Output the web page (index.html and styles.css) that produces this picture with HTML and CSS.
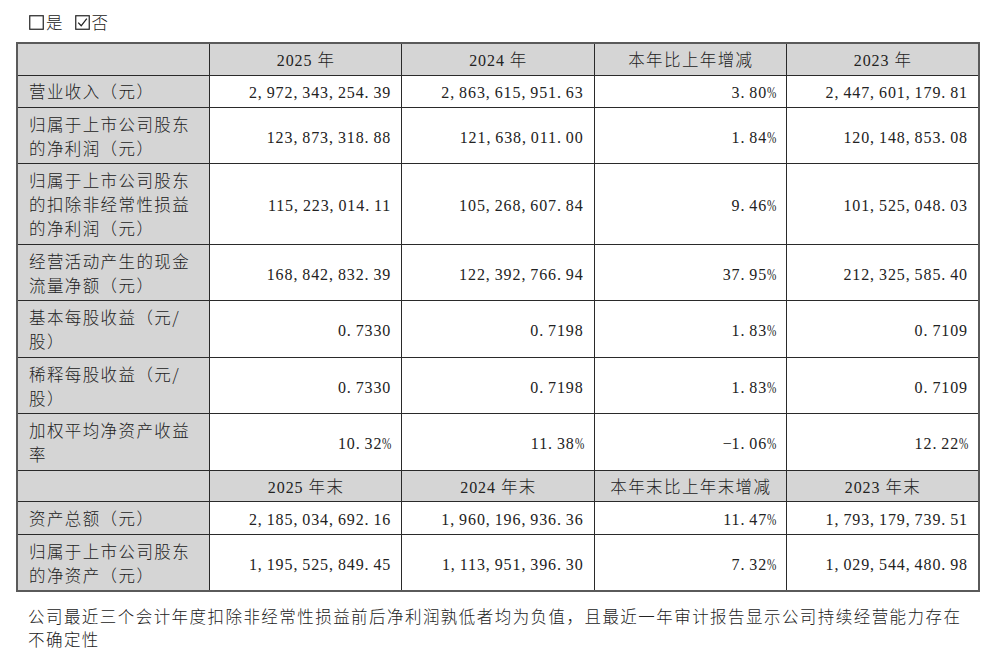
FILE: index.html
```html
<!DOCTYPE html>
<html lang="zh-CN">
<head>
<meta charset="utf-8">
<title>主要会计数据</title>
<link rel="stylesheet" href="styles.css">
</head>
<body>
<div class="page">
  <div class="choice">
    <svg class="cb" width="15" height="15" viewBox="0 0 15 15"><rect x="0.75" y="0.75" width="13.5" height="13.5" fill="none" stroke="#222" stroke-width="1.2"/></svg><span class="lbl">是</span>
    <svg class="cb cb2" width="15" height="15" viewBox="0 0 15 15"><rect x="0.75" y="0.75" width="13.5" height="13.5" fill="none" stroke="#222" stroke-width="1.2"/><path d="M3.2 7.6 L6.2 10.8 L11.8 3.6" fill="none" stroke="#222" stroke-width="1.3"/></svg><span class="lbl">否</span>
  </div>

  <table class="fin">
    <tr class="hd">
      <td></td>
      <td><span class="n">2025</span> 年</td>
      <td><span class="n">2024</span> 年</td>
      <td>本年比上年增减</td>
      <td><span class="n">2023</span> 年</td>
    </tr>
    <tr>
      <td class="lab">营业收入（元）</td>
      <td class="v"><span class="n">2<i>,</i>972<i>,</i>343<i>,</i>254<i>.</i>39</span></td>
      <td class="v"><span class="n">2<i>,</i>863<i>,</i>615<i>,</i>951<i>.</i>63</span></td>
      <td class="v"><span class="n">3<i>.</i>80<b>%</b></span></td>
      <td class="v"><span class="n">2<i>,</i>447<i>,</i>601<i>,</i>179<i>.</i>81</span></td>
    </tr>
    <tr>
      <td class="lab">归属于上市公司股东<br>的净利润（元）</td>
      <td class="v"><span class="n">123<i>,</i>873<i>,</i>318<i>.</i>88</span></td>
      <td class="v"><span class="n">121<i>,</i>638<i>,</i>011<i>.</i>00</span></td>
      <td class="v"><span class="n">1<i>.</i>84<b>%</b></span></td>
      <td class="v"><span class="n">120<i>,</i>148<i>,</i>853<i>.</i>08</span></td>
    </tr>
    <tr>
      <td class="lab">归属于上市公司股东<br>的扣除非经常性损益<br>的净利润（元）</td>
      <td class="v"><span class="n">115<i>,</i>223<i>,</i>014<i>.</i>11</span></td>
      <td class="v"><span class="n">105<i>,</i>268<i>,</i>607<i>.</i>84</span></td>
      <td class="v"><span class="n">9<i>.</i>46<b>%</b></span></td>
      <td class="v"><span class="n">101<i>,</i>525<i>,</i>048<i>.</i>03</span></td>
    </tr>
    <tr>
      <td class="lab">经营活动产生的现金<br>流量净额（元）</td>
      <td class="v"><span class="n">168<i>,</i>842<i>,</i>832<i>.</i>39</span></td>
      <td class="v"><span class="n">122<i>,</i>392<i>,</i>766<i>.</i>94</span></td>
      <td class="v"><span class="n">37<i>.</i>95<b>%</b></span></td>
      <td class="v"><span class="n">212<i>,</i>325<i>,</i>585<i>.</i>40</span></td>
    </tr>
    <tr>
      <td class="lab">基本每股收益（元/<br>股）</td>
      <td class="v"><span class="n">0<i>.</i>7330</span></td>
      <td class="v"><span class="n">0<i>.</i>7198</span></td>
      <td class="v"><span class="n">1<i>.</i>83<b>%</b></span></td>
      <td class="v"><span class="n">0<i>.</i>7109</span></td>
    </tr>
    <tr>
      <td class="lab">稀释每股收益（元/<br>股）</td>
      <td class="v"><span class="n">0<i>.</i>7330</span></td>
      <td class="v"><span class="n">0<i>.</i>7198</span></td>
      <td class="v"><span class="n">1<i>.</i>83<b>%</b></span></td>
      <td class="v"><span class="n">0<i>.</i>7109</span></td>
    </tr>
    <tr>
      <td class="lab">加权平均净资产收益<br>率</td>
      <td class="v"><span class="n">10<i>.</i>32<b>%</b></span></td>
      <td class="v"><span class="n">11<i>.</i>38<b>%</b></span></td>
      <td class="v"><span class="n"><i class="m">−</i>1<i>.</i>06<b>%</b></span></td>
      <td class="v"><span class="n">12<i>.</i>22<b>%</b></span></td>
    </tr>
    <tr class="hd">
      <td></td>
      <td><span class="n">2025</span> 年末</td>
      <td><span class="n">2024</span> 年末</td>
      <td>本年末比上年末增减</td>
      <td><span class="n">2023</span> 年末</td>
    </tr>
    <tr>
      <td class="lab">资产总额（元）</td>
      <td class="v"><span class="n">2<i>,</i>185<i>,</i>034<i>,</i>692<i>.</i>16</span></td>
      <td class="v"><span class="n">1<i>,</i>960<i>,</i>196<i>,</i>936<i>.</i>36</span></td>
      <td class="v"><span class="n">11<i>.</i>47<b>%</b></span></td>
      <td class="v"><span class="n">1<i>,</i>793<i>,</i>179<i>,</i>739<i>.</i>51</span></td>
    </tr>
    <tr>
      <td class="lab">归属于上市公司股东<br>的净资产（元）</td>
      <td class="v"><span class="n">1<i>,</i>195<i>,</i>525<i>,</i>849<i>.</i>45</span></td>
      <td class="v"><span class="n">1<i>,</i>113<i>,</i>951<i>,</i>396<i>.</i>30</span></td>
      <td class="v"><span class="n">7<i>.</i>32<b>%</b></span></td>
      <td class="v"><span class="n">1<i>,</i>029<i>,</i>544<i>,</i>480<i>.</i>98</span></td>
    </tr>
  </table>

  <p class="note">公司最近三个会计年度扣除非经常性损益前后净利润孰低者均为负值，且最近一年审计报告显示公司持续经营能力存在<br>不确定性</p>
</div>
</body>
</html>
```

FILE: styles.css
```css
html, body {
  margin: 0;
  padding: 0;
  background: #ffffff;
}

body {
  font-family: "Noto Sans CJK SC", "Noto Sans", sans-serif;
  font-weight: 300;
  color: #222222;
}

.page {
  padding: 10px 0 0 16px;
  width: 966px;
}

.choice {
  height: 24px;
  line-height: 24px;
  padding-left: 13px;
  margin-bottom: 8px;
  font-size: 16.5px;
  display: flex;
  align-items: center;
}

.cb {
  display: block;
  flex: none;
}

.cb2 {
  margin-left: 12px;
}

.lbl {
  margin-left: 2px;
}

.fin {
  border-collapse: collapse;
  table-layout: fixed;
  width: 964px;
  border: 2px solid #5a5a5a;
}

.fin td {
  border: 1px solid #2a2a2a;
  padding: 3.8px 10px 3.7px 11px;
  line-height: 24px;
  font-size: 16.5px;
  letter-spacing: 1.4px;
  vertical-align: middle;
  white-space: nowrap;
}

.fin tr.hd td {
  background: #d5d5d5;
  text-align: center;
  padding-top: 3px;
  padding-bottom: 3.5px;
}

.fin td.lab {
  background: #d5d5d5;
}

.fin td.v {
  text-align: right;
  padding-right: 10px;
}

.n {
  font-family: "Liberation Serif", serif;
  font-weight: 400;
  font-size: 16px;
  line-height: 16px;
  letter-spacing: 0.9px;
}

.n i {
  font-style: normal;
  display: inline-block;
  width: 8.9px;
  letter-spacing: 0;
  text-align: left;
}

.n i.m {
  text-align: center;
}

.n b {
  font-weight: normal;
  display: inline-block;
  width: 8.9px;
  letter-spacing: 0;
  transform: scaleX(0.7);
  transform-origin: left center;
}

.note {
  margin: 13px 0 0 0;
  padding-left: 12px;
  font-size: 16.5px;
  letter-spacing: 1.45px;
  line-height: 23px;
  white-space: nowrap;
}
```
